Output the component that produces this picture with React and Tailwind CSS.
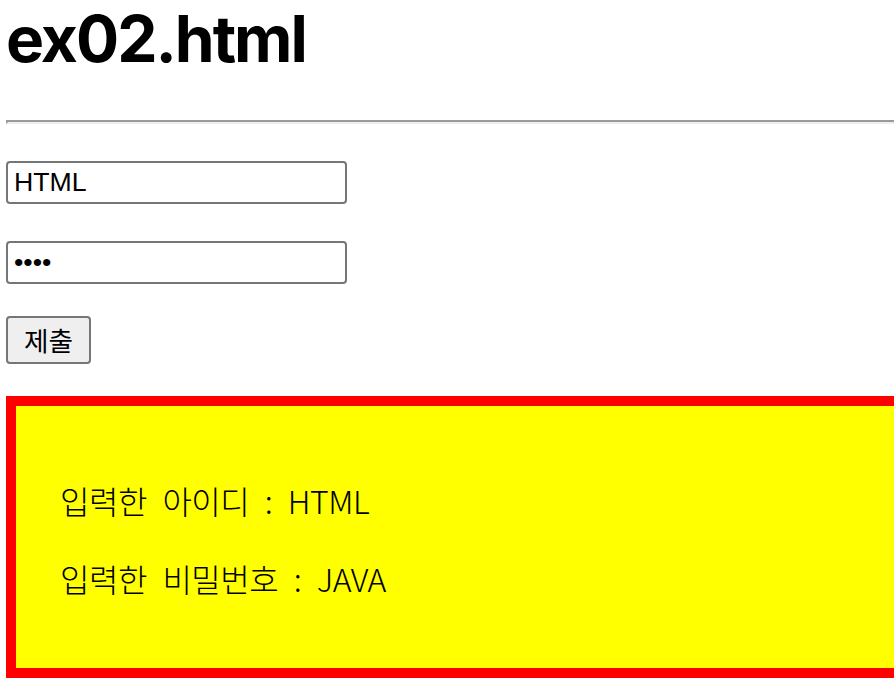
export default function App() {
  return (
    <div className="w-[894px] h-[678px] overflow-hidden bg-white text-black">
      <div className="pl-[6px] w-[1000px]">
        <h1 className="text-[64px] leading-[78px] font-bold tracking-[-2px] font-['Inter','Noto_Sans_CJK_KR',sans-serif]">
          ex02.html
        </h1>
        <div className="mt-[42px] h-[4px] border-t-2 border-l-2 border-t-[#9a9a9a] border-l-[#9a9a9a] border-b-2 border-b-[#eeeeee]" />
        <div className="mt-[37px] flex flex-col items-start">
          <input
            type="text"
            defaultValue="HTML"
            className="w-[341px] h-[43px] px-[6px] border-2 border-[#767676] rounded-[4px] text-[26.7px] font-['Liberation_Sans',sans-serif] text-black outline-none"
          />
          <input
            type="password"
            defaultValue="JAVA"
            className="mt-[37px] w-[341px] h-[43px] px-[6px] border-2 border-[#767676] rounded-[4px] text-[26.7px] font-['Liberation_Sans',sans-serif] text-black outline-none"
          />
          <button className="mt-[32px] w-[85px] h-[48px] bg-[#efefef] border-2 border-[#767676] rounded-[4px] text-[26.7px] leading-none font-['Noto_Sans_CJK_KR',sans-serif]">
            제출
          </button>
        </div>
        <div className="mt-[32px] border-[10px] border-[#ff0000] bg-[#ffff00] pl-[44px] pt-[72px] pb-[68px] font-['Noto_Sans_CJK_KR',sans-serif] text-[32px] leading-[44px] font-light tracking-[-0.5px] [word-spacing:9px]">
          <p>입력한 아이디 : HTML</p>
          <p className="mt-[34px]">입력한 비밀번호 : JAVA</p>
        </div>
      </div>
    </div>
  );
}
